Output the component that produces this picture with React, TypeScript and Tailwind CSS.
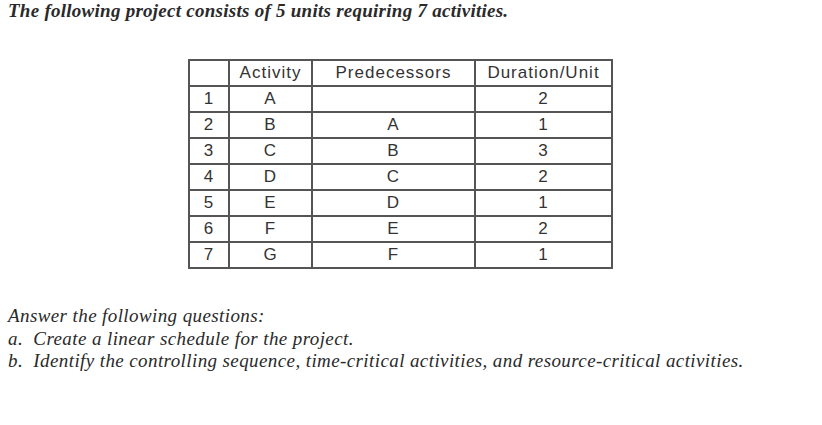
import React from "react";

const rows = [
  ["1", "A", "", "2"],
  ["2", "B", "A", "1"],
  ["3", "C", "B", "3"],
  ["4", "D", "C", "2"],
  ["5", "E", "D", "1"],
  ["6", "F", "E", "2"],
  ["7", "G", "F", "1"],
];

export default function App() {
  return (
    <div className="w-[822px] h-[425px] bg-white text-[#222] overflow-hidden relative">
      <div
        className="pl-[8px] pt-[0px] text-[19px] leading-[22px] tracking-[0.26px] font-bold italic text-[#2a2a2a]"
        style={{ fontFamily: '"Liberation Serif", serif' }}
      >
        The following project consists of 5 units requiring 7 activities.
      </div>
      <div className="pl-[188px] pt-[37px]">
        <table
          className="border-collapse text-[17px] tracking-[1px] text-[#333]"
          style={{ fontFamily: '"Liberation Sans", Arial, sans-serif' }}
        >
          <thead>
            <tr className="h-[26px]">
              <th className="w-[40px] border-2 border-[#555] font-normal p-0"></th>
              <th className="w-[83px] border-2 border-[#555] font-normal p-0 leading-[22px]">Activity</th>
              <th className="w-[163px] border-2 border-[#555] font-normal p-0 leading-[22px]">Predecessors</th>
              <th className="w-[137px] border-2 border-[#555] font-normal p-0 leading-[22px]">Duration/Unit</th>
            </tr>
          </thead>
          <tbody>
            {rows.map((r) => (
              <tr key={r[0]} className="h-[26px]">
                {r.map((c, i) => (
                  <td key={i} className="border-2 border-[#555] p-0 text-center leading-[22px]">
                    {c}
                  </td>
                ))}
              </tr>
            ))}
          </tbody>
        </table>
      </div>
      <div
        className="pl-[8px] pt-[36px] text-[19px] leading-[22.5px] tracking-[0.4px] italic text-[#2a2a2a]"
        style={{ fontFamily: '"Liberation Serif", serif' }}
      >
        <div>Answer the following questions:</div>
        <div>a.&nbsp; Create a linear schedule for the project.</div>
        <div>b.&nbsp; Identify the controlling sequence, time-critical activities, and resource-critical activities.</div>
      </div>
    </div>
  );
}
